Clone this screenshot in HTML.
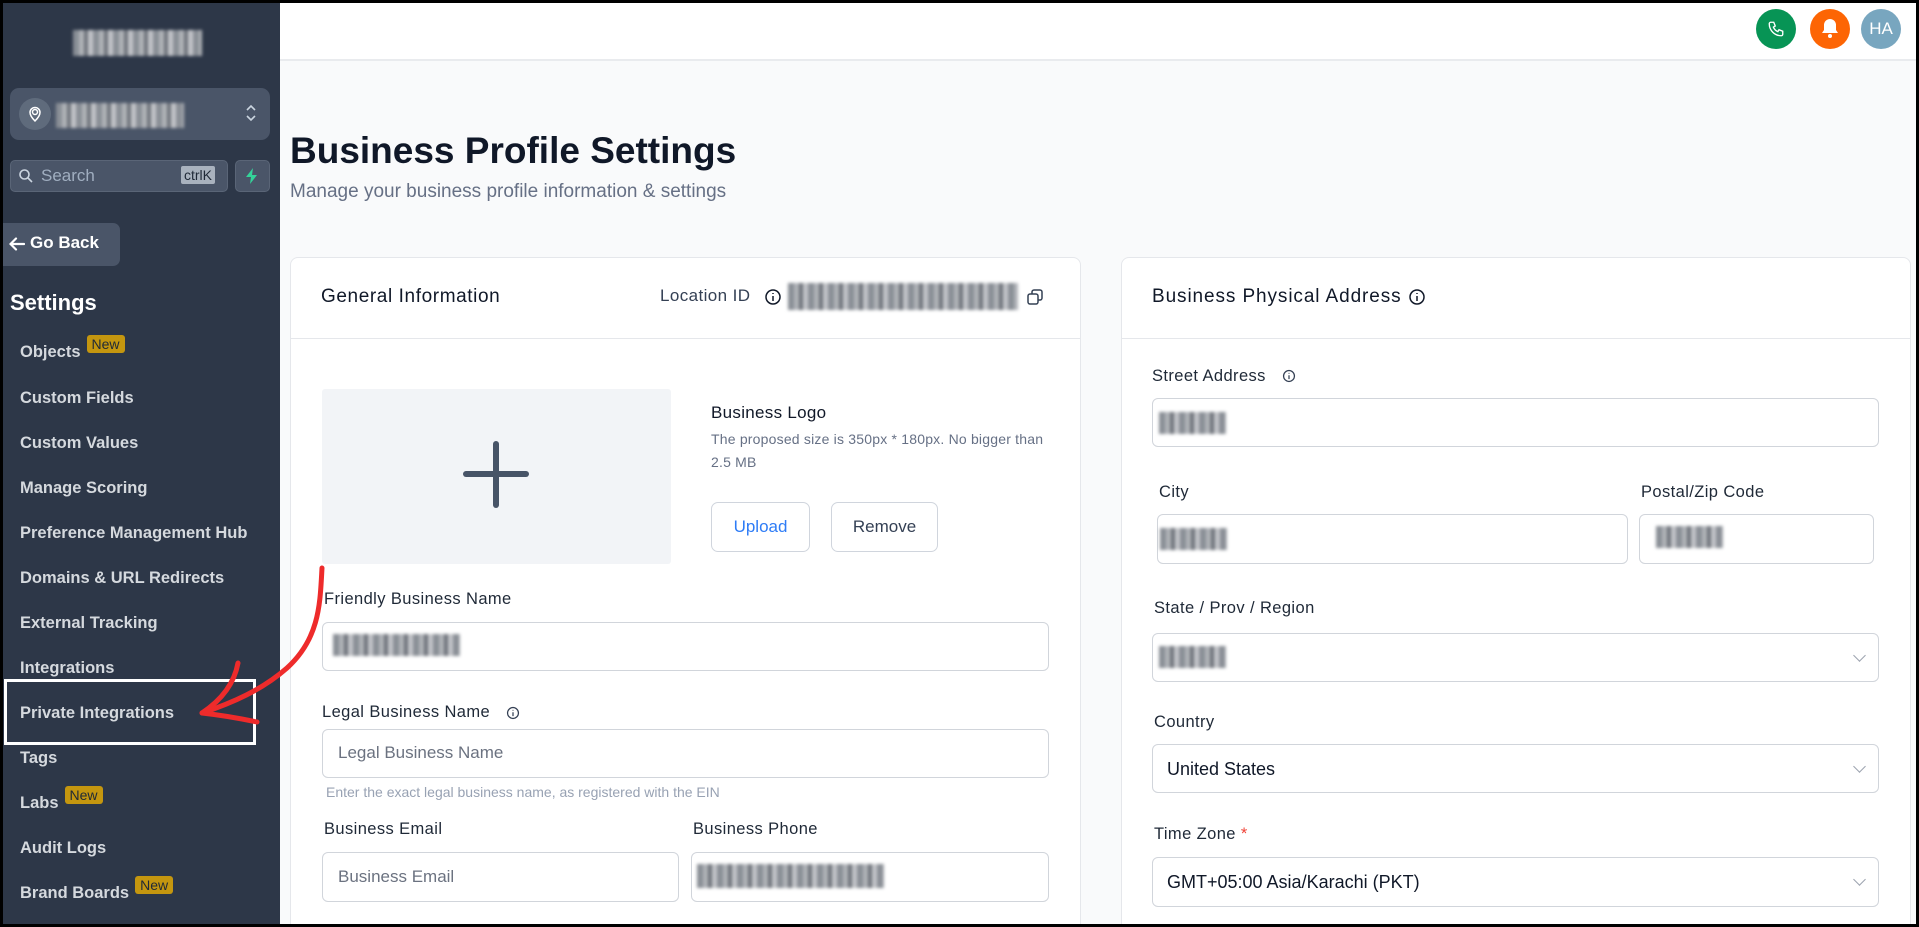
<!DOCTYPE html>
<html style="overflow:hidden;width:1919px;height:927px"><head><meta charset="utf-8"><style>
*{box-sizing:border-box;margin:0;padding:0}
body{width:1919px;height:927px;overflow:hidden;background:#f9fafb;font-family:"Liberation Sans",sans-serif;position:relative}
.abs{position:absolute}
.frame{position:absolute;left:0;top:0;width:1919px;height:927px;border:3px solid #000;z-index:50;pointer-events:none}
.sb{left:0;top:0;width:280px;height:927px;background:#2d3748}
.blur{background:repeating-linear-gradient(90deg,#8a8f96 0 6px,#b0b3b8 6px 11px,#6f747b 11px 15px,#c3c5c9 15px 20px);filter:blur(1.5px)}
.mi{position:absolute;left:20px;color:#d5d9de;font-size:16.5px;font-weight:bold}
.new{display:inline-block;background:#c4960f;color:#1f2937;font-size:14px;font-weight:normal;padding:1px 5px;border-radius:3px;position:relative;top:-8px;margin-left:6px}
.card{background:#fff;border:1px solid #e5e7eb;border-radius:8px}
.lbl{position:absolute;font-size:16.5px;color:#1f2937;letter-spacing:0.4px}
.inp{position:absolute;background:#fff;border:1px solid #d1d5db;border-radius:6px}
.ph{position:absolute;font-size:17px;color:#6b7280}
.chev{position:absolute;right:14px;top:17px;width:9px;height:9px;border-right:1.5px solid #9ca3af;border-bottom:1.5px solid #9ca3af;transform:rotate(45deg)}
</style></head><body>
<div class="frame"></div>
<div class="abs sb"></div>
<div class="abs blur" style="left:73px;top:30px;width:129px;height:26px"></div>
<div class="abs" style="left:10px;top:88px;width:260px;height:52px;background:#4a5568;border-radius:9px"></div>
<div class="abs" style="left:19px;top:98px;width:32px;height:32px;border-radius:50%;background:#5f6b7c"></div>
<svg class="abs" style="left:26px;top:105px" width="18" height="18" viewBox="0 0 18 18" fill="none" stroke="#fff" stroke-width="1.5"><circle cx="9" cy="7" r="2.5"/><path d="M9 16c-3-3-5-5.5-5-8.5a5 5 0 0 1 10 0c0 3-2 5.5-5 8.5z"/></svg>
<div class="abs blur" style="left:56px;top:103px;width:128px;height:25px"></div>
<svg class="abs" style="left:245px;top:102px" width="12" height="22" viewBox="0 0 12 22" fill="none" stroke="#cbd5e0" stroke-width="1.6"><path d="M2 8l4-4 4 4M2 14l4 4 4-4"/></svg>
<div class="abs" style="left:10px;top:160px;width:218px;height:32px;background:#4a5568;border-radius:5px;border:1px solid #5a6577"></div>
<svg class="abs" style="left:18px;top:168px" width="16" height="16" viewBox="0 0 16 16" fill="none" stroke="#cbd5e0" stroke-width="1.6"><circle cx="6.5" cy="6.5" r="4.5"/><path d="M10 10l4 4"/></svg>
<div class="abs" style="left:41px;top:166px;color:#a0aec0;font-size:17px">Search</div>
<div class="abs" style="left:181px;top:166px;background:#a9b2be;color:#1f2937;font-size:14px;padding:1px 3px;border-radius:2px">ctrlK</div>
<div class="abs" style="left:235px;top:160px;width:35px;height:32px;background:#4a5568;border-radius:5px;border:1px solid #5a6577"></div>
<svg class="abs" style="left:245px;top:168px" width="14" height="16" viewBox="0 0 14 16"><path d="M8 0L1 9h5l-1 7 7-9H7z" fill="#34d399"/></svg>
<div class="abs" style="left:3px;top:223px;width:117px;height:43px;background:#4a5568;border-radius:0 7px 7px 0"></div>
<svg class="abs" style="left:9px;top:237px" width="16" height="14" viewBox="0 0 16 14" fill="none" stroke="#fff" stroke-width="2.2" stroke-linecap="round"><path d="M15 7H2M7 1.5L1.5 7 7 12.5"/></svg>
<div class="abs" style="left:30px;top:233px;color:#fff;font-size:17px;font-weight:bold">Go Back</div>
<div class="abs" style="left:10px;top:290px;color:#fff;font-size:22px;font-weight:bold">Settings</div>
<div class="mi" style="top:343px">Objects<span class="new">New</span></div>
<div class="mi" style="top:389px">Custom Fields</div>
<div class="mi" style="top:434px">Custom Values</div>
<div class="mi" style="top:479px">Manage Scoring</div>
<div class="mi" style="top:524px">Preference Management Hub</div>
<div class="mi" style="top:569px">Domains &amp; URL Redirects</div>
<div class="mi" style="top:614px">External Tracking</div>
<div class="mi" style="top:659px">Integrations</div>
<div class="mi" style="top:704px">Private Integrations</div>
<div class="mi" style="top:749px">Tags</div>
<div class="mi" style="top:794px">Labs<span class="new">New</span></div>
<div class="mi" style="top:839px">Audit Logs</div>
<div class="mi" style="top:884px">Brand Boards<span class="new">New</span></div>
<div class="abs" style="left:4px;top:679px;width:252px;height:66px;border:3px solid #fff;z-index:5"></div>
<!-- topbar -->
<div class="abs" style="left:280px;top:0;width:1639px;height:61px;background:#fff;border-bottom:2px solid #e9ebee"></div>
<div class="abs" style="left:1756px;top:9px;width:40px;height:40px;border-radius:50%;background:#079455"></div>
<svg class="abs" style="left:1767px;top:20px" width="18" height="18" viewBox="0 0 24 24" fill="none" stroke="#fff" stroke-width="1.8"><path d="M5 3h4l2 5-2.5 1.5a11 11 0 0 0 6 6L16 13l5 2v4a2 2 0 0 1-2 2A16 16 0 0 1 3 5a2 2 0 0 1 2-2"/></svg>
<div class="abs" style="left:1810px;top:9px;width:40px;height:40px;border-radius:50%;background:#fd6504"></div>
<svg class="abs" style="left:1820px;top:18px" width="20" height="22" viewBox="0 0 20 22"><path d="M10 1a6 6 0 0 0-6 6v5l-2 3h16l-2-3V7a6 6 0 0 0-6-6z" fill="#fff"/><circle cx="10" cy="18" r="2" fill="#fff"/></svg>
<div class="abs" style="left:1861px;top:9px;width:40px;height:40px;border-radius:50%;background:#78a6bf;color:#fff;font-size:17px;text-align:center;line-height:40px">HA</div>
<!-- title -->
<div class="abs" style="left:290px;top:130px;font-size:37px;font-weight:bold;color:#101828">Business Profile Settings</div>
<div class="abs" style="left:290px;top:181px;font-size:19px;color:#667085">Manage your business profile information &amp; settings</div>
<!-- left card -->
<div class="abs card" style="left:290px;top:257px;width:791px;height:690px"></div>
<div class="abs" style="left:290px;top:338px;width:791px;height:1px;background:#e5e7eb"></div>
<div class="abs" style="left:321px;top:286px;font-size:19px;color:#101828;letter-spacing:0.6px">General Information</div>
<div class="abs" style="left:660px;top:286px;font-size:17px;color:#344054;letter-spacing:0.4px">Location ID</div>
<svg class="abs" style="left:764px;top:288px" width="18" height="18" viewBox="0 0 18 18" fill="none" stroke="#101828" stroke-width="1.5"><circle cx="9" cy="9" r="7"/><path d="M9 8v5M9 5v1"/></svg>
<div class="abs blur" style="left:788px;top:283px;width:230px;height:27px"></div>
<svg class="abs" style="left:1026px;top:288px" width="18" height="18" viewBox="0 0 18 18" fill="none" stroke="#344054" stroke-width="1.5"><rect x="2" y="6" width="10" height="10" rx="2"/><path d="M6 6V4a2 2 0 0 1 2-2h6a2 2 0 0 1 2 2v6a2 2 0 0 1-2 2h-2"/></svg>
<div class="abs" style="left:322px;top:389px;width:349px;height:175px;background:#f2f4f7;border-radius:3px"></div>
<div class="abs" style="left:493px;top:441px;width:6px;height:67px;background:#475467;border-radius:3px"></div>
<div class="abs" style="left:463px;top:471px;width:66px;height:6px;background:#475467;border-radius:3px"></div>
<div class="abs" style="left:711px;top:403px;font-size:17px;color:#101828;letter-spacing:0.3px">Business Logo</div>
<div class="abs" style="left:711px;top:428px;font-size:14px;color:#667085;line-height:23px;width:340px;letter-spacing:0.2px">The proposed size is 350px * 180px. No bigger than 2.5 MB</div>
<div class="abs" style="left:711px;top:502px;width:99px;height:50px;border:1px solid #d0d5dd;border-radius:7px;color:#2e7cf6;font-size:17px;text-align:center;line-height:48px">Upload</div>
<div class="abs" style="left:831px;top:502px;width:107px;height:50px;border:1px solid #d0d5dd;border-radius:7px;color:#344054;font-size:17px;text-align:center;line-height:48px">Remove</div>
<div class="lbl" style="left:324px;top:590px">Friendly Business Name</div>
<div class="inp" style="left:322px;top:622px;width:727px;height:49px"></div>
<div class="abs blur" style="left:333px;top:634px;width:127px;height:22px"></div>
<div class="lbl" style="left:322px;top:703px">Legal Business Name</div>
<svg class="abs" style="left:506px;top:706px" width="14" height="14" viewBox="0 0 18 18" fill="none" stroke="#344054" stroke-width="1.6"><circle cx="9" cy="9" r="7"/><path d="M9 8v5M9 5v1"/></svg>
<div class="inp" style="left:322px;top:729px;width:727px;height:49px"></div>
<div class="ph" style="left:338px;top:743px">Legal Business Name</div>
<div class="abs" style="left:326px;top:784px;font-size:14px;color:#98a2b3">Enter the exact legal business name, as registered with the EIN</div>
<div class="lbl" style="left:324px;top:820px">Business Email</div>
<div class="lbl" style="left:693px;top:820px">Business Phone</div>
<div class="inp" style="left:322px;top:852px;width:357px;height:50px"></div>
<div class="ph" style="left:338px;top:867px">Business Email</div>
<div class="inp" style="left:691px;top:852px;width:358px;height:50px"></div>
<div class="abs blur" style="left:697px;top:864px;width:187px;height:24px"></div>
<!-- right card -->
<div class="abs card" style="left:1121px;top:257px;width:790px;height:690px"></div>
<div class="abs" style="left:1121px;top:338px;width:790px;height:1px;background:#e5e7eb"></div>
<div class="abs" style="left:1152px;top:286px;font-size:19px;color:#101828;letter-spacing:0.9px">Business Physical Address</div>
<svg class="abs" style="left:1408px;top:288px" width="18" height="18" viewBox="0 0 18 18" fill="none" stroke="#101828" stroke-width="1.5"><circle cx="9" cy="9" r="7"/><path d="M9 8v5M9 5v1"/></svg>
<div class="lbl" style="left:1152px;top:367px">Street Address</div>
<svg class="abs" style="left:1282px;top:369px" width="14" height="14" viewBox="0 0 18 18" fill="none" stroke="#344054" stroke-width="1.6"><circle cx="9" cy="9" r="7"/><path d="M9 8v5M9 5v1"/></svg>
<div class="inp" style="left:1152px;top:398px;width:727px;height:49px"></div>
<div class="abs blur" style="left:1159px;top:412px;width:67px;height:22px"></div>
<div class="lbl" style="left:1159px;top:483px">City</div>
<div class="lbl" style="left:1641px;top:483px">Postal/Zip Code</div>
<div class="inp" style="left:1157px;top:514px;width:471px;height:50px"></div>
<div class="abs blur" style="left:1160px;top:528px;width:67px;height:22px"></div>
<div class="inp" style="left:1639px;top:514px;width:235px;height:50px"></div>
<div class="abs blur" style="left:1656px;top:526px;width:67px;height:22px"></div>
<div class="lbl" style="left:1154px;top:599px">State / Prov / Region</div>
<div class="inp" style="left:1152px;top:633px;width:727px;height:49px"><div class="chev"></div></div>
<div class="abs blur" style="left:1159px;top:646px;width:67px;height:22px"></div>
<div class="lbl" style="left:1154px;top:713px">Country</div>
<div class="inp" style="left:1152px;top:744px;width:727px;height:49px"><div class="chev"></div></div>
<div class="abs" style="left:1167px;top:759px;font-size:18px;color:#101828">United States</div>
<div class="lbl" style="left:1154px;top:825px">Time Zone <span style="color:#f04438">*</span></div>
<div class="inp" style="left:1152px;top:857px;width:727px;height:50px"><div class="chev"></div></div>
<div class="abs" style="left:1167px;top:872px;font-size:18px;color:#101828">GMT+05:00 Asia/Karachi (PKT)</div>
<!-- arrow -->
<svg class="abs" style="left:190px;top:560px;z-index:10" width="140" height="180" viewBox="0 0 140 180" fill="none" stroke="#ee2b2b" stroke-width="5" stroke-linecap="round" stroke-linejoin="round"><path d="M132 8c-2 35-2 70-35 100-25 22-55 35-85 45"/><path d="M48 103c-4 22-18 38-36 50 18 2 36 5 55 9"/></svg>
</body></html>
